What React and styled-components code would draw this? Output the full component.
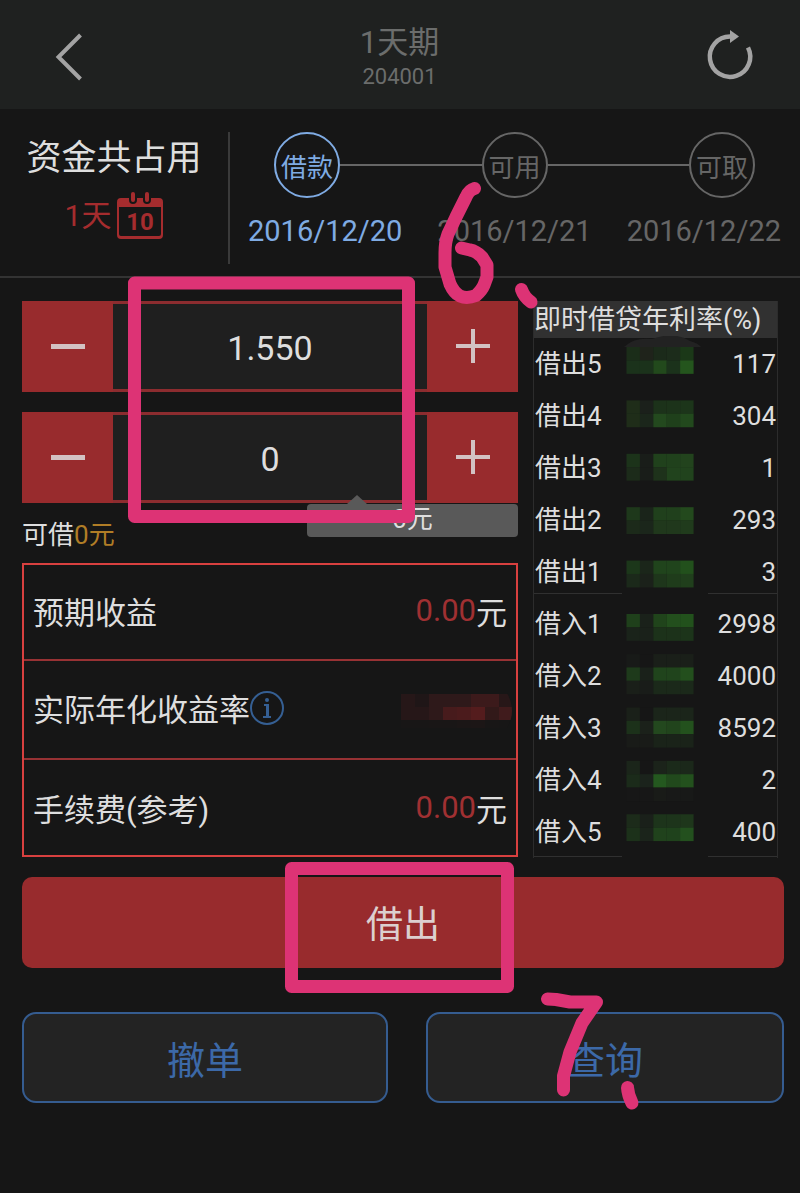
import React, { useState } from "react";
import styled, { createGlobalStyle } from "styled-components";

const GlobalStyle = createGlobalStyle`
  * {
    box-sizing: border-box;
  }
  body {
    margin: 0;
    background: #161616;
  }
  button,
  input {
    font: inherit;
    margin: 0;
    padding: 0;
    border: 0;
  }
`;

const Page = styled.div`
  position: relative;
  min-height: 100vh;
  padding-bottom: 88px;
  background: #161616;
  color: #dedede;
  font-family: Roboto, "Noto Sans CJK SC", sans-serif;
  font-size: 26px;
`;

const Header = styled.header`
  display: flex;
  align-items: center;
  justify-content: space-between;
  height: 109px;
  padding: 4px 45px 0 44px;
  background: #1f2120;
`;

const IconButton = styled.button`
  display: flex;
  background: none;
  color: #a3a3a3;
`;

const Heading = styled.div`
  text-align: center;
  color: #6b6d6c;
  h1 {
    margin: 0;
    font-size: 31px;
    font-weight: 400;
    line-height: 40px;
  }
  p {
    margin: 0;
    font-size: 22px;
    line-height: 28px;
  }
`;

const Summary = styled.section`
  display: flex;
  height: 169px;
  padding: 23px 0 12px;
  border-bottom: 2px solid #333;
`;

const Occupied = styled.div`
  width: 230px;
  border-right: 2px solid #3a3a3a;
  text-align: center;
  h2 {
    margin: 0;
    font-size: 35px;
    font-weight: 400;
    line-height: 54px;
  }
`;

const Days = styled.div`
  display: flex;
  align-items: center;
  justify-content: center;
  gap: 6px;
  margin-top: 6px;
  color: #a52c2e;
  font-size: 30px;
  line-height: 48px;
`;

const Timeline = styled.div`
  flex: 1;
`;

const Track = styled.div`
  display: flex;
  align-items: center;
  padding: 0 45px 0 44px;
`;

const Step = styled.span`
  display: flex;
  align-items: center;
  justify-content: center;
  width: 66px;
  height: 66px;
  border: 2px solid currentColor;
  border-radius: 50%;
  color: ${props => (props.$active ? "#7fabe3" : "#666")};
`;

const Line = styled.span`
  flex: 1;
  height: 2px;
  background: #666;
`;

const Dates = styled.div`
  display: flex;
  justify-content: space-between;
  margin-top: 16px;
  padding: 0 19px 0 18px;
  font-size: 29px;
  line-height: 34px;
`;

const StepDate = styled.span`
  color: ${props => (props.$active ? "#7fabe3" : "#666")};
`;

const Main = styled.main`
  padding: 23px 16px 0 22px;
`;

const Columns = styled.div`
  display: grid;
  grid-template-columns: minmax(0, 1fr) 245px;
  gap: 15px;
  padding-right: 6px;
`;

const StepperBox = styled.div`
  display: flex;
  height: 91px;
  margin-bottom: ${props => (props.$last ? "0" : "20px")};
  input {
    flex: 1;
    min-width: 0;
    padding-top: 2px;
    background: #1f1f1f;
    border: solid #8c2c2f;
    border-width: 3px 0;
    color: #dedede;
    font-size: 34px;
    text-align: center;
  }
  button {
    display: flex;
    align-items: center;
    justify-content: center;
    width: 91px;
    padding-bottom: 2px;
    background: #982b2d;
    color: #d3c2c3;
  }
`;

const Available = styled.div`
  position: relative;
  height: 60px;
  padding-top: 13px;
  line-height: 38px;
  em {
    color: #b07d26;
    font-style: normal;
  }
`;

const Bubble = styled.div`
  position: absolute;
  top: 1px;
  right: 0;
  width: 211px;
  height: 33px;
  border-radius: 4px;
  background: #595959;
  line-height: 30px;
  text-align: center;
  &::before {
    content: "";
    position: absolute;
    left: 40px;
    bottom: 100%;
    border: solid transparent;
    border-width: 0 10px 9px;
    border-bottom-color: #595959;
  }
`;

const Estimates = styled.dl`
  margin: 0;
  border: 2px solid #d8403f;
`;

const Estimate = styled.div`
  display: flex;
  align-items: center;
  justify-content: space-between;
  height: 99px;
  padding: 0 9px 4px;
  font-size: 31px;
  & + & {
    border-top: 2px solid #983234;
  }
  &:first-child {
    height: 94px;
  }
  &:last-child {
    height: 97px;
    padding-bottom: 0;
  }
  dt,
  dd {
    display: flex;
    align-items: center;
    margin: 0;
  }
  b {
    color: #a03032;
    font-weight: 400;
  }
`;

const HiddenRate = styled.svg`
  margin-right: -6px;
`;

const Book = styled.div`
  position: relative;
`;

const BookTable = styled.table`
  width: 100%;
  border-collapse: collapse;
  table-layout: fixed;
  border: solid #2c2c2c;
  border-width: 0 1px;
  th {
    padding: 2px 0 0;
    height: 37px;
    background: #313131;
    font-size: 27px;
    font-weight: 400;
    line-height: 35px;
    text-align: left;
    white-space: nowrap;
  }
  td {
    padding: 0 1px;
    height: 52px;
    line-height: 52px;
  }
  td:last-child {
    text-align: right;
  }
`;

const NameCol = styled.col`
  width: 88px;
`;

const CountCol = styled.col`
  width: 70px;
`;

const Quote = styled.tr`
  td {
    position: relative;
  }
  td:first-child::after,
  td:last-child::after {
    content: "";
    position: absolute;
    left: 0;
    right: 0;
    bottom: ${props => (props.$end ? "1px" : "4px")};
    height: ${props => (props.$line ? "1px" : "0")};
    background: #303030;
  }
`;

const Mosaic = styled.svg`
  position: absolute;
  top: 35px;
  left: 90px;
`;

const Submit = styled.button`
  display: block;
  width: 100%;
  height: 91px;
  margin-top: 19px;
  border-radius: 10px;
  background: #982b2d;
  color: #dccfcf;
  && {
    padding-bottom: 2px;
    font-size: 37px;
  }
`;

const Actions = styled.div`
  display: grid;
  grid-template-columns: 366fr 358fr;
  gap: 38px;
  margin-top: 44px;
`;

const Action = styled.button`
  height: 91px;
  border-radius: 14px;
  background: #232323;
  color: #3c69a8;
  && {
    border: 2px solid #355c90;
    font-size: 38px;
  }
`;

const Marks = styled.svg`
  position: absolute;
  top: 0;
  left: 0;
  width: 100%;
  pointer-events: none;
`;

const steps = [
  { name: "借款", date: "2016/12/20", active: true },
  { name: "可用", date: "2016/12/21" },
  { name: "可取", date: "2016/12/22" }
];

const quotes = [
  ["借出5", 117],
  ["借出4", 304],
  ["借出3", 1],
  ["借出2", 293],
  ["借出1", 3],
  ["借入1", 2998],
  ["借入2", 4000],
  ["借入3", 8592],
  ["借入4", 2],
  ["借入5", 400]
];

// grid row -> five tile colours
const greenTiles = {
  0: ["#1b2d19", "#1f231b", "#1b2a1a", "#1c2c1b", "#1b3818"],
  1: ["#1b321b", "#1b321b", "#22491c", "#1b321b", "#24551d"],
  4: ["#1f2d19", "#1b201b", "#1c321a", "#1c331a", "#1c351a"],
  5: ["#1f2d19", "#1b261b", "#23491e", "#1f401b", "#22491d"],
  8: ["#1c331a", "#191d19", "#20411c", "#20411c", "#22431d"],
  9: ["#1c2b1a", "#191d19", "#1e321b", "#21431d", "#21431d"],
  12: ["#1e381b", "#1a241a", "#20401c", "#20401c", "#23491d"],
  13: ["#1c2a1a", "#1b261b", "#20381c", "#20381c", "#203b1c"],
  16: ["#1c371a", "#1b261a", "#20441c", "#20441c", "#22501c"],
  17: ["#1b291a", "#1b211a", "#1e361b", "#1f3c1b", "#203f1c"],
  20: ["#1f401b", "#1a211a", "#20441b", "#234f1d", "#22511c"],
  21: ["#1a231a", "#1a211a", "#1c321a", "#1c321a", "#1c341a"],
  23: ["#181a18", "#161616", "#1a1f19", "#1a1f19", "#1a1f19"],
  24: ["#1e3a1b", "#1a211a", "#20441c", "#20441c", "#234f1d"],
  25: ["#1a1f19", "#191c19", "#1b291a", "#1b291a", "#1b291a"],
  27: ["#1a2019", "#161616", "#1b251a", "#1b251a", "#1b251a"],
  28: ["#1c311a", "#1b211a", "#23481e", "#21441c", "#23511d"],
  29: ["#191b18", "#191b18", "#1a2319", "#1a2319", "#1a2319"],
  31: ["#1b251a", "#161616", "#1b231a", "#1b2a1a", "#1b281a"],
  32: ["#1b2b1a", "#1b231c", "#24581f", "#21491c", "#23511d"],
  33: ["#171717", "#171717", "#191b18", "#181918", "#181918"],
  35: ["#1c2b1a", "#1a201a", "#1d341b", "#1d341b", "#1e361b"],
  36: ["#1c311a", "#1b241b", "#20421c", "#1f421c", "#23501e"]
};

const redTiles = [
  ["#261718", "#1f1617", "#2e191a", "#2e191a", "#2e191a", "#3c1a1b", "#3c1a1b", "#271718"],
  ["#261718", "#261718", "#2e191a", "#471b1c", "#4b1b1c", "#541c1d", "#321919", "#401b1c"],
  ["#181616", "#181616", "#191616", "#191616", "#1b1616", "#1c1616", "#181616", "#171616"]
];

const Stepper = ({ label, value, onChange, step, digits, last }) => {
  const change = by => onChange(Math.max(0, Number(value) + by).toFixed(digits));
  return (
    <StepperBox $last={last}>
      <button aria-label={`${label}减少`} onClick={() => change(-step)}>
        <svg width="34" height="34" viewBox="0 0 34 34" fill="currentColor">
          <rect y="15" width="34" height="5" />
        </svg>
      </button>
      <input
        aria-label={label}
        value={value}
        onChange={e => onChange(e.target.value)}
      />
      <button aria-label={`${label}增加`} onClick={() => change(step)}>
        <svg width="34" height="34" viewBox="0 0 34 34" fill="currentColor">
          <path d="M15 0h4v15h15v4h-15v15h-4v-15h-15v-4h15z" />
        </svg>
      </button>
    </StepperBox>
  );
};

const Calendar = () => (
  <svg width="46" height="48" viewBox="0 0 46 48" fill="currentColor">
    <path
      d="M4 6H12V8A4 4 0 0 0 20 8V6H26V8A4 4 0 0 0 34 8V6H42A4 4 0 0 1 46 10V43A4 4 0 0 1 42 47H4A4 4 0 0 1 0 43V10A4 4 0 0 1 4 6ZM2 15V42A2 2 0 0 0 4 44H42A2 2 0 0 0 44 42V15Z"
      fillRule="evenodd"
    />
    <rect x="14" y="0" width="4" height="10" rx="2" />
    <rect x="28" y="0" width="4" height="10" rx="2" />
    <text x="23" y="38" fontSize="24" fontWeight="700" textAnchor="middle">
      10
    </text>
  </svg>
);

const App = () => {
  const [rate, setRate] = useState("1.550");
  const [amount, setAmount] = useState("0");

  return (
    <Page>
      <GlobalStyle />
      <Header>
        <IconButton aria-label="返回">
          <svg width="50" height="50" viewBox="0 0 50 50" fill="none" stroke="currentColor" strokeWidth="4">
            <path d="M36.500 3 14.500 25l22 22" />
          </svg>
        </IconButton>
        <Heading>
          <h1>1天期</h1>
          <p>204001</p>
        </Heading>
        <IconButton aria-label="刷新">
          <svg width="50" height="54" viewBox="0 0 50 54" fill="none" stroke="currentColor" strokeWidth="4.500">
            <path d="M43 17.500A20.200 20.200 0 1 1 25 6.500" />
            <path d="M25 0l9 6.500-9 6.500z" fill="currentColor" stroke="none" />
          </svg>
        </IconButton>
      </Header>

      <Summary>
        <Occupied>
          <h2>资金共占用</h2>
          <Days>
            1天
            <Calendar />
          </Days>
        </Occupied>
        <Timeline>
          <Track>
            {steps.map((s, i) => (
              <React.Fragment key={s.name}>
                {i > 0 && <Line />}
                <Step $active={s.active}>{s.name}</Step>
              </React.Fragment>
            ))}
          </Track>
          <Dates>
            {steps.map(s => (
              <StepDate key={s.date} $active={s.active}>
                {s.date}
              </StepDate>
            ))}
          </Dates>
        </Timeline>
      </Summary>

      <Main>
        <Columns>
          <div>
            <Stepper label="利率" value={rate} onChange={setRate} step={0.005} digits={3} />
            <Stepper label="金额" value={amount} onChange={setAmount} step={1000} digits={0} last />
            <Available>
              可借<em>0元</em>
              <Bubble>0元</Bubble>
            </Available>
            <Estimates>
              <Estimate>
                <dt>预期收益</dt>
                <dd>
                  <b>0.00</b>元
                </dd>
              </Estimate>
              <Estimate>
                <dt>
                  实际年化收益率
                  <svg width="34" height="34" viewBox="0 0 34 34" fill="#355f93">
                    <circle cx="17" cy="17" r="16" fill="none" stroke="#355f93" strokeWidth="2" />
                    <path d="M14 13h5v12h2v2h-8v-2h3v-10h-2z" />
                    <circle cx="17" cy="9" r="2" />
                  </svg>
                </dt>
                <dd>
                  <HiddenRate width="112" height="40" viewBox="0 0 112 40">
                    {redTiles.map((row, y) =>
                      row.map((fill, x) => (
                        <rect key={`${x}-${y}`} x={x * 14} y={y * 13 + 6} width="14" height="13" fill={fill} />
                      ))
                    )}
                    <path d="M106 5h6v35h-6q10-17 0-35z" fill="#161616" />
                  </HiddenRate>
                </dd>
              </Estimate>
              <Estimate>
                <dt>手续费(参考)</dt>
                <dd>
                  <b>0.00</b>元
                </dd>
              </Estimate>
            </Estimates>
          </div>

          <Book>
            <BookTable>
              <colgroup>
                <NameCol />
                <col />
                <CountCol />
              </colgroup>
              <thead>
                <tr>
                  <th colSpan="3">即时借贷年利率(%)</th>
                </tr>
              </thead>
              <tbody>
                {quotes.map(([name, count], i) => (
                  <Quote key={name} $line={i === 4 || i === 9} $end={i === 9}>
                    <td>{name}</td>
                    <td />
                    <td>{count}</td>
                  </Quote>
                ))}
              </tbody>
            </BookTable>
            <Mosaic width="78" height="506" viewBox="0 0 78 506">
              <path d="M1 11q10-10 28-8q22-8 38 2q8 2 11 6z" fill="#222" />
              {Object.entries(greenTiles).map(([y, row]) =>
                row.map((fill, x) => (
                  <rect
                    key={`${x}-${y}`}
                    x={3.5 + x * 13.4}
                    y={11 + y * 13.35}
                    width="13.5"
                    height="13.5"
                    fill={fill}
                  />
                ))
              )}
            </Mosaic>
          </Book>
        </Columns>

        <Submit>借出</Submit>
        <Actions>
          <Action>撤单</Action>
          <Action>查询</Action>
        </Actions>
      </Main>

      <Marks
        viewBox="0 0 800 1193"
        fill="none"
        stroke="#dd3375"
        strokeWidth="13"
        strokeLinecap="round"
        strokeLinejoin="round"
      >
        <rect x="134.500" y="283" width="274" height="233.500" />
        <rect x="291.500" y="868.500" width="216" height="118" />
        <path d="M474.500 188.500Q469 190 466 197L456 217L448 234Q445 242 445 253V267L450 284Q454 293 460 296Q467 299 476 295.500Q482 290 484 285L487 277V265L482 257Q476 251 470 250L461.500 248" />
        <path d="M521.500 289.500Q524 297 531 302" />
        <path d="M547.500 999L556 999.500L570 1002H596.500L582 1023L570 1052L563.500 1076V1090" />
        <path d="M627.500 1087.500Q628 1095 632 1103" />
      </Marks>
    </Page>
  );
};

export default App;
